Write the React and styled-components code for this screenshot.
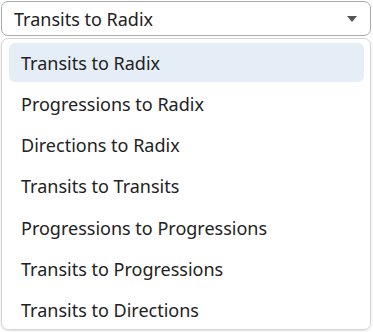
import React from "react";
import styled, { createGlobalStyle } from "styled-components";

const Global = createGlobalStyle`
  html, body { margin: 0; padding: 0; background: #fff; }
  body { font-family: "Noto Sans", "Open Sans", sans-serif; color: #222; }
`;

const Wrap = styled.div`
  width: 373px;
  height: 332px;
  padding: 1px 2px 0 1px;
  box-sizing: border-box;
  display: flex;
  flex-direction: column;
  gap: 2px;
`;

const Trigger = styled.div`
  height: 35px;
  box-sizing: border-box;
  border: 1px solid #a9a9a9;
  border-radius: 7px;
  display: flex;
  align-items: center;
  justify-content: space-between;
  padding: 0 13px 0 12px;
  font-size: 18px;
  line-height: 1;
  color: #222;
`;

const Caret = styled.span`
  width: 0;
  height: 0;
  border-left: 5.5px solid transparent;
  border-right: 5.5px solid transparent;
  border-top: 6px solid #555;
  margin-top: 1px;
`;

const Menu = styled.ul`
  list-style: none;
  margin: 0;
  height: 292px;
  box-sizing: border-box;
  border: 1px solid #d4d4d4;
  border-radius: 7px;
  box-shadow: 0 1px 3px rgba(0, 0, 0, 0.12);
  padding: 4px 6px 0 7px;
  display: flex;
  flex-direction: column;
  gap: 2.33px;
`;

const Item = styled.li`
  height: 39px;
  flex: none;
  display: flex;
  align-items: center;
  padding: 0 12px;
  border-radius: 6px;
  font-size: 18px;
  line-height: 1;
  color: #222;
  background: ${(p) => (p.$active ? "#e5edf7" : "transparent")};
`;

const options = [
  "Transits to Radix",
  "Progressions to Radix",
  "Directions to Radix",
  "Transits to Transits",
  "Progressions to Progressions",
  "Transits to Progressions",
  "Transits to Directions",
];

export default function App() {
  return (
    <>
      <Global />
      <Wrap>
        <Trigger>
          <span>Transits to Radix</span>
          <Caret />
        </Trigger>
        <Menu>
          {options.map((o, i) => (
            <Item key={o} $active={i === 0}>
              {o}
            </Item>
          ))}
        </Menu>
      </Wrap>
    </>
  );
}
